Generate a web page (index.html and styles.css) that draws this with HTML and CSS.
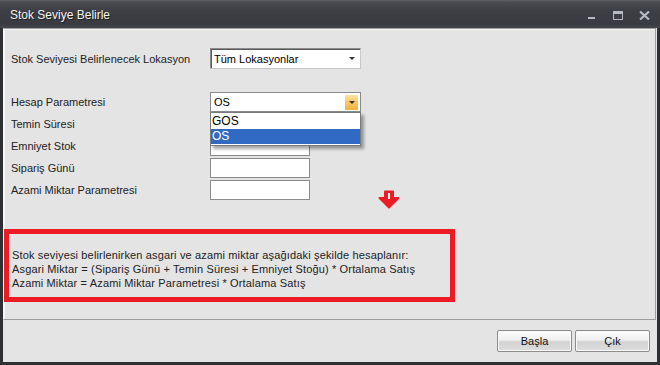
FILE: index.html
```html
<!DOCTYPE html>
<html lang="tr">
<head>
    <meta charset="UTF-8">
    <title>Stok Seviye Belirle</title>
    <link rel="stylesheet" href="styles.css">
</head>
<body>
    <div class="window">
        <div class="titlebar">
            <span class="title">Stok Seviye Belirle</span>
            <div class="controls">
                <span class="ctl ctl-min"></span>
                <span class="ctl ctl-max"></span>
                <svg class="ctl-close" width="11" height="9" viewBox="0 0 11 9">
                    <path d="M1 0.5 L10 8.5 M10 0.5 L1 8.5" stroke="#b4b9c2" stroke-width="2.2" fill="none"/>
                </svg>
            </div>
        </div>

        <div class="frame">
            <div class="panel">
                <div class="form">
                    <div class="row row-first">
                        <label>Stok Seviyesi Belirlenecek Lokasyon</label>
                        <div class="combo combo-wide">
                            <span class="combo-text">Tüm Lokasyonlar</span>
                            <span class="combo-btn"><span class="arrow"></span></span>
                        </div>
                    </div>

                    <div class="row row-gap">
                        <label>Hesap Parametresi</label>
                        <div class="combo combo-wide combo-open">
                            <span class="combo-text">OS</span>
                            <span class="combo-btn combo-btn-hot"><span class="arrow"></span></span>
                            <ul class="dropdown">
                                <li>GOS</li>
                                <li class="selected">OS</li>
                            </ul>
                        </div>
                    </div>

                    <div class="row">
                        <label>Temin Süresi</label>
                        <input class="field" type="text">
                    </div>
                    <div class="row">
                        <label>Emniyet Stok</label>
                        <input class="field" type="text">
                    </div>
                    <div class="row">
                        <label>Sipariş Günü</label>
                        <input class="field" type="text">
                    </div>
                    <div class="row">
                        <label>Azami Miktar Parametresi</label>
                        <input class="field" type="text">
                    </div>
                </div>

                <svg class="hint-arrow" width="22" height="19" viewBox="0 0 22 19">
                    <path d="M7 1.5 H15 V8 H20.5 L11 17.5 L1.5 8 H7 Z" fill="#ed1c24" stroke="#ed1c24" stroke-width="2" stroke-linejoin="round"/>
                    <rect x="10" y="3" width="2" height="6" fill="#f4f4f4"/>
                </svg>

                <div class="info">
                    <p>Stok seviyesi belirlenirken asgari ve azami miktar aşağıdaki şekilde hesaplanır:</p>
                    <p>Asgari Miktar = (Sipariş Günü + Temin Süresi + Emniyet Stoğu) * Ortalama Satış</p>
                    <p>Azami Miktar = Azami Miktar Parametresi * Ortalama Satış</p>
                </div>
            </div>

            <div class="footer">
                <button class="btn">Başla</button>
                <button class="btn">Çık</button>
            </div>
        </div>
    </div>
</body>
</html>
```

FILE: styles.css
```css
body {
    margin: 0;
    padding: 0;
    background: #2d2f33;
    font-family: 'Liberation Sans', Arial, sans-serif;
    font-size: 11px;
    color: #1e1e1e;
}

.window {
    width: 660px;
    height: 365px;
    display: flex;
    flex-direction: column;
    background: #2e3034;
    overflow: hidden;
}

.titlebar {
    height: 28px;
    flex: none;
    display: flex;
    align-items: center;
    justify-content: space-between;
    padding: 0 10px 0 10px;
    background: linear-gradient(to bottom, #5d6066 0px, #4a4c51 2px, #3d3f44 10px, #393b40 24px, #45474c 28px);
    box-sizing: border-box;
}

.title {
    color: #f2f2f4;
    font-size: 12px;
    text-shadow: 1px 1px 0 #1c1d20;
    padding-top: 1px;
}

.controls {
    display: flex;
    align-items: center;
    padding-top: 2px;
}

.ctl {
    display: block;
    background: transparent;
}

.ctl-min {
    width: 7px;
    height: 2px;
    background: #b4b9c2;
    margin-top: 6px;
    margin-right: 18px;
}

.ctl-max {
    width: 8px;
    height: 5px;
    border: 1px solid #b4b9c2;
    border-top-width: 3px;
    margin-right: 16px;
}

.frame {
    flex: 1;
    display: flex;
    flex-direction: column;
    margin: 0 3px 3px 3px;
    background: #e4e4e4;
}

.panel {
    position: relative;
    height: 292px;
    box-sizing: border-box;
    border: 1px solid #9d9d9d;
    border-left-color: #f6f6f6;
    box-shadow: inset 1px 1px 0 #f6f6f6;
    margin-right: 1px;
    background: #e4e4e4;
}

.form {
    display: flex;
    flex-direction: column;
    gap: 2px;
    padding: 19px 0 0 7px;
}

.row {
    display: flex;
    align-items: center;
    height: 20px;
}

.row-first {
    height: 21px;
}

.row-gap {
    margin-top: 21px;
}

.row label {
    width: 199px;
    flex: none;
    color: #222;
}

.combo {
    position: relative;
    width: 151px;
    height: 100%;
    box-sizing: border-box;
    border: 1px solid #8a8a8a;
    border-right-color: #c8c8c8;
    border-bottom-color: #c8c8c8;
    background: #fff;
    box-shadow: inset 1px 1px 0 #5a5a5a;
    display: flex;
    align-items: center;
    justify-content: space-between;
}

.combo-open {
    border: 1px solid #8a8a8a;
    box-shadow: none;
}

.combo-text {
    padding-left: 3px;
    color: #000;
}

.combo-btn {
    width: 13px;
    height: 15px;
    margin-right: 2px;
    display: flex;
    align-items: center;
    justify-content: center;
}

.combo-btn-hot {
    background: linear-gradient(to bottom, #fbe6a6, #f6c35b 55%, #f2b43f);
}

.arrow {
    width: 0;
    height: 0;
    border-left: 3px solid transparent;
    border-right: 3px solid transparent;
    border-top: 3px solid #333;
}

.dropdown {
    position: absolute;
    top: 19px;
    left: -1px;
    width: 151px;
    margin: 0;
    padding: 1px 0;
    list-style: none;
    box-sizing: border-box;
    background: #fff;
    border: 1px solid #7a7a7a;
    box-shadow: 3px 3px 3px rgba(0, 0, 0, 0.35);
    z-index: 10;
}

.dropdown li {
    height: 15px;
    line-height: 15px;
    padding-left: 1px;
    font-size: 12px;
    color: #000;
}

.dropdown li.selected {
    background: #316ac5;
    color: #fff;
}

.field {
    width: 100px;
    height: 20px;
    margin: 0;
    padding: 0;
    box-sizing: border-box;
    border: 1px solid #8a8a8a;
    background: #fff;
}

.hint-arrow {
    position: absolute;
    left: 374px;
    top: 161px;
}

.info {
    margin: 29px 0 0 0;
    width: 451px;
    height: 73px;
    box-sizing: border-box;
    border: 5px solid #ed1c24;
    padding: 14px 0 0 3px;
    font-size: 11px;
    color: #222;
    letter-spacing: 0.15px;
}

.info p {
    margin: 0;
    line-height: 14px;
}

.footer {
    flex: 1;
    display: flex;
    justify-content: flex-end;
    align-items: flex-start;
    gap: 3px;
    padding: 10px 7px 0 0;
}

.btn {
    width: 75px;
    height: 22px;
    font-family: 'Liberation Sans', Arial, sans-serif;
    font-size: 11px;
    color: #111;
    border: 1px solid #8c8c8c;
    border-radius: 2px;
    background: linear-gradient(to bottom, #fdfdfd 0%, #efefef 45%, #d2d2d2 55%, #dedede 100%);
    box-shadow: inset 0 0 0 1px #f8f8f8;
    padding: 0;
}
```
